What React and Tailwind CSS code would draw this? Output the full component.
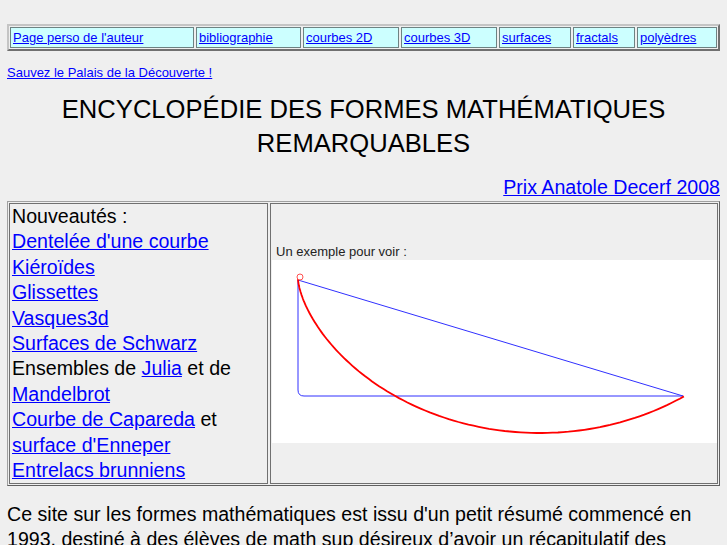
import React from "react";

const navLinks = [
  { label: "Page perso de l'auteur", w: "w-[184px]" },
  { label: "bibliographie", w: "w-[105px]" },
  { label: "courbes 2D", w: "w-[96px]" },
  { label: "courbes 3D", w: "w-[96px]" },
  { label: "surfaces", w: "w-[72px]" },
  { label: "fractals", w: "w-[62px]" },
  { label: "polyèdres", w: "flex-1" },
];

function Link({ children }) {
  return <a href="#" className="text-[#0000ff] underline">{children}</a>;
}

function Cycloid() {
  // brachistochrone : arc de cycloïde entre deux points
  const r = 77;
  const pts = [];
  for (let i = 0; i <= 120; i++) {
    const t = (4.16 * i) / 120;
    pts.push(`${(26 + r * (t - Math.sin(t))).toFixed(1)},${(19 + r * (1 - Math.cos(t))).toFixed(1)}`);
  }
  return (
    <svg width="445" height="183" className="block bg-white">
      <line x1="26" y1="20" x2="411" y2="136" stroke="#3030ff" strokeWidth="1" />
      <path d="M26 20 V130 Q26 136 32 136 H411" fill="none" stroke="#3030ff" strokeWidth="1" />
      <polyline points={pts.join(" ")} fill="none" stroke="#ff0000" strokeWidth="1.8" />
      <circle cx="28" cy="17" r="3" fill="#fff" stroke="#ff5050" strokeWidth="1" />
    </svg>
  );
}

export default function App() {
  return (
    <div className="min-h-[545px] bg-[#efefef] px-[7px] pt-[24px] font-['Liberation_Sans',Arial,sans-serif] text-black">
      {/* barre de navigation */}
      <div className="flex gap-[2px] border-2 border-t-[#c4c4c4] border-l-[#c4c4c4] border-b-[#707070] border-r-[#707070] p-px">
        {navLinks.map((l) => (
          <div
            key={l.label}
            className={`${l.w} h-[21px] border border-[#6e8282] bg-[#ccffff] px-[2px] text-[13px] leading-[19px]`}
          >
            <Link>{l.label}</Link>
          </div>
        ))}
      </div>

      <div className="mt-[14px] text-[13px] leading-[16px]">
        <Link>Sauvez le Palais de la Découverte !</Link>
      </div>

      <h1 className="mt-[11px] text-center text-[25.6px] leading-[34px] font-normal">
        ENCYCLOPÉDIE DES FORMES MATHÉMATIQUES
        <br />
        REMARQUABLES
      </h1>

      <div className="mt-[16px] text-right text-[19.6px] leading-[22px]">
        <Link>Prix Anatole Decerf 2008</Link>
      </div>

      {/* tableau principal */}
      <div className="mt-[3px] flex gap-[2px] border border-t-[#a0a0a0] border-l-[#a0a0a0] border-b-[#606060] border-r-[#606060] p-px">
        <div className="w-[260px] border border-[#707070] px-[2px] text-[19.6px] leading-[25.4px]">
          <div>Nouveautés :</div>
          <div><Link>Dentelée d'une courbe</Link></div>
          <div><Link>Kiéroïdes</Link></div>
          <div><Link>Glissettes</Link></div>
          <div><Link>Vasques3d</Link></div>
          <div><Link>Surfaces de Schwarz</Link></div>
          <div>Ensembles de <Link>Julia</Link> et de</div>
          <div><Link>Mandelbrot</Link></div>
          <div><Link>Courbe de Capareda</Link> et</div>
          <div><Link>surface d'Enneper</Link></div>
          <div><Link>Entrelacs brunniens</Link></div>
        </div>
        <div className="flex flex-1 flex-col justify-center border border-[#707070] pl-px">
          <div className="pl-[4px] text-[13px] leading-[16px] text-[#222]">Un exemple pour voir :</div>
          <Cycloid />
        </div>
      </div>

      <p className="mt-[16px] text-[19.6px] leading-[25px]">
        Ce site sur les formes mathématiques est issu d'un petit résumé commencé en 1993, destiné à des élèves de math sup désireux d’avoir un récapitulatif des
        courbes classiques.
      </p>
    </div>
  );
}
